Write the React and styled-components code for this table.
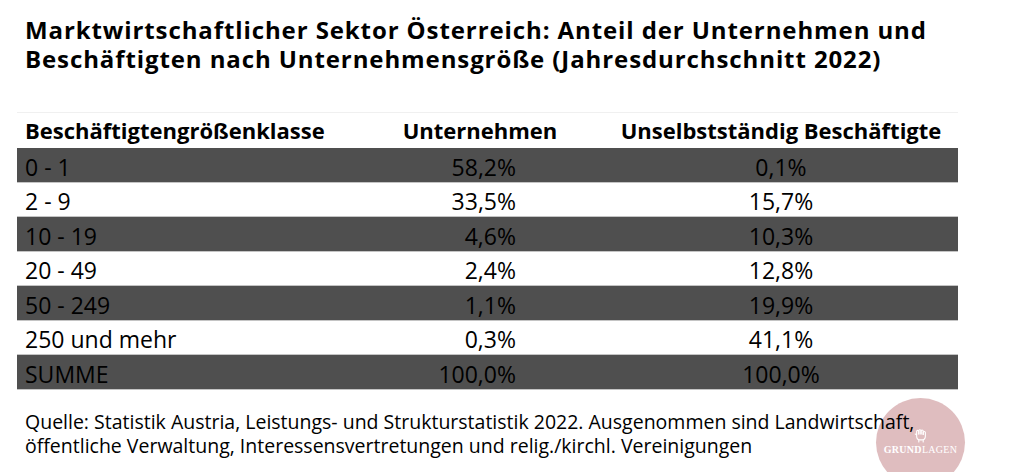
import React from "react";
import styled, { createGlobalStyle } from "styled-components";

const Global = createGlobalStyle`
  html, body { margin: 0; padding: 0; background: #ffffff; }
  body { font-family: "Open Sans", Lato, sans-serif; color: #000; }
`;

const Page = styled.div`
  width: 1024px;
  height: 472px;
  overflow: hidden;
  position: relative;
  background: #fff;
`;

const Title = styled.h1`
  margin: 0;
  padding: 15px 0 0 25px;
  font-size: 24px;
  line-height: 29px;
  font-weight: 700;
  letter-spacing: 0.9px;
  white-space: nowrap;
`;

const Table = styled.div`
  margin: 39px 0 0 17px;
  width: 941px;
  display: grid;
  grid-template-columns: 339px 248px 354px;
  border-top: 1px solid #f0f0f0;
`;

const Row = styled.div`
  display: contents;
`;

const Cell = styled.div`
  box-sizing: border-box;
  height: ${(p) => (p.$head ? "35px" : p.$dark ? "35px" : "34px")};
  display: flex;
  align-items: flex-end;
  padding: 0 ${(p) => p.$pr || 0}px ${(p) => (p.$head ? 6 : 3)}px ${(p) => p.$pl || 0}px;
  justify-content: ${(p) => p.$align || "flex-start"};
  background: ${(p) => (p.$dark ? "#4f4f4f" : "#ffffff")};
  border-bottom: ${(p) => (p.$head ? "0" : "1px solid #c4c4c4")};
  font-size: ${(p) => (p.$head ? 22 : 23)}px;
  font-weight: ${(p) => (p.$head ? 700 : 400)};
  line-height: 24px;
  white-space: nowrap;
`;

const Note = styled.p`
  position: relative;
  z-index: 2;
  margin: 20px 0 0 25px;
  font-size: 19.5px;
  line-height: 24px;
  white-space: nowrap;
`;

const Logo = styled.div`
  position: absolute;
  z-index: 1;
  left: 876px;
  top: 398px;
  width: 89px;
  height: 89px;
  border-radius: 50%;
  background: #dfbdbf;
  display: flex;
  flex-direction: column;
  align-items: center;
  padding-top: 30px;
  box-sizing: border-box;
`;

const LogoText = styled.div`
  margin-top: 1px;
  font-family: "Liberation Serif", "DejaVu Serif", serif;
  font-size: 10px;
  letter-spacing: 0.3px;
  color: #fff;
  b { font-weight: 700; }
`;

const rows = [
  ["0 - 1", "58,2%", "0,1%"],
  ["2 - 9", "33,5%", "15,7%"],
  ["10 - 19", "4,6%", "10,3%"],
  ["20 - 49", "2,4%", "12,8%"],
  ["50 - 249", "1,1%", "19,9%"],
  ["250 und mehr", "0,3%", "41,1%"],
  ["SUMME", "100,0%", "100,0%"],
];

export default function App() {
  return (
    <Page>
      <Global />
      <Title>
        Marktwirtschaftlicher Sektor Österreich: Anteil der Unternehmen und
        <br />
        Beschäftigten nach Unternehmensgröße (Jahresdurchschnitt 2022)
      </Title>
      <Table>
        <Row>
          <Cell $head $pl={8}>Beschäftigtengrößenklasse</Cell>
          <Cell $head $align="center">Unternehmen</Cell>
          <Cell $head $align="center">Unselbstständig Beschäftigte</Cell>
        </Row>
        {rows.map((r, i) => (
          <Row key={r[0]}>
            <Cell $dark={i % 2 === 0} $pl={8}>{r[0]}</Cell>
            <Cell $dark={i % 2 === 0} $align="flex-end" $pr={88}>{r[1]}</Cell>
            <Cell $dark={i % 2 === 0} $align="center">{r[2]}</Cell>
          </Row>
        ))}
      </Table>
      <Note>
        Quelle: Statistik Austria, Leistungs- und Strukturstatistik 2022. Ausgenommen sind Landwirtschaft,
        <br />
        öffentliche Verwaltung, Interessensvertretungen und relig./kirchl. Vereinigungen
      </Note>
      <Logo>
        <svg width="16" height="15" viewBox="0 0 22 20" fill="none" stroke="#fff" strokeWidth="1.5" strokeLinecap="round" strokeLinejoin="round">
          <path d="M5 9 V4.5 a1.5 1.5 0 0 1 3 0 V8" />
          <path d="M8 8 V3.5 a1.5 1.5 0 0 1 3 0 V8" />
          <path d="M11 8 V4 a1.5 1.5 0 0 1 3 0 V8.5" />
          <path d="M14 8.5 V6 a1.5 1.5 0 0 1 3 0 V11 c0 3 -2 5 -5 5 h-2 c-3 0 -5 -2 -5 -5 V9 l-2 -1" />
          <path d="M8 19 v-3 M14 19 v-3" />
        </svg>
        <LogoText><b>GRUND</b>LAGEN</LogoText>
      </Logo>
    </Page>
  );
}
